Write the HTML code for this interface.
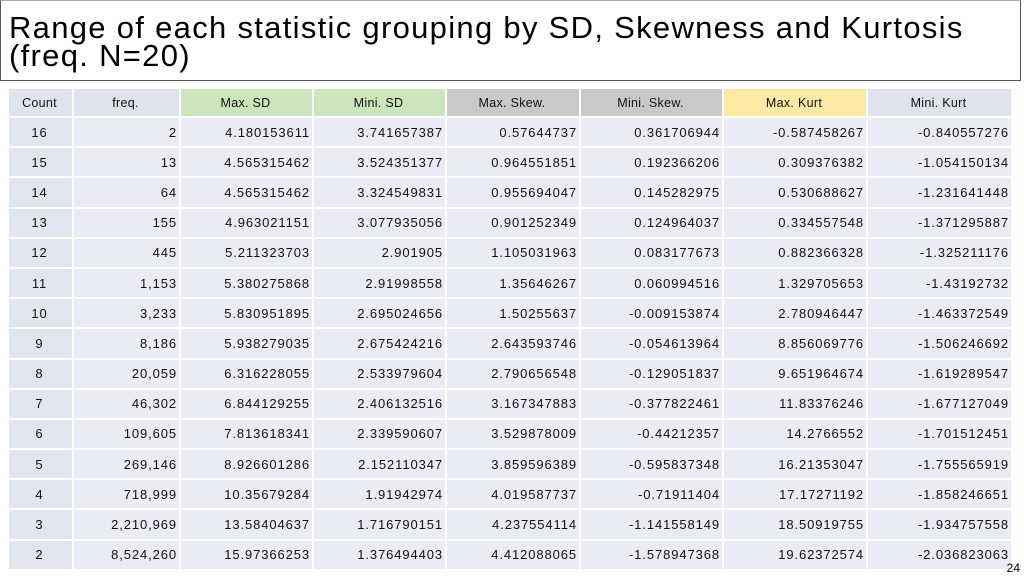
<!DOCTYPE html>
<html><head><meta charset="utf-8"><style>
body{margin:0;width:1024px;height:576px;background:#fff;font-family:"Liberation Sans",sans-serif;overflow:hidden;position:relative}
.title{position:absolute;left:0;top:0;width:1021px;height:81px;border:1px solid #555;border-top-color:#aaa;box-sizing:border-box}
.title div{position:absolute;left:8px;font-size:31px;letter-spacing:1.3px;color:#000;line-height:30px;white-space:nowrap}
table{position:absolute;left:7px;top:87px;border-collapse:collapse;font-size:13px;color:#111;table-layout:fixed}
td{border:2px solid #fff;padding:0 2px 0 0;height:28.2px;text-align:right;background:#e9ecf5;letter-spacing:0.9px;white-space:nowrap;overflow:hidden}
tr.h td{background:#dfe3ee;text-align:center;font-size:12.5px;height:27px;letter-spacing:0.3px}
td.c{text-align:center;background:#e1e5f0}
.g{background:#cde5bd!important}.s{background:#c9c9c9!important}.y{background:#fde9a4!important}
.pg{position:absolute;right:4px;bottom:1px;font-size:12px}
</style></head><body>
<div class="title"><div style="top:12px">Range of each statistic grouping by SD, Skewness and Kurtosis</div><div style="top:40px">(freq. N=20)</div></div>
<table>
<colgroup><col style="width:65px"><col style="width:107px"><col style="width:133px"><col style="width:133px"><col style="width:134px"><col style="width:143px"><col style="width:144px"><col style="width:145px"></colgroup>
<tr class="h"><td>Count</td><td>freq.</td><td class="g">Max. SD</td><td class="g">Mini. SD</td><td class="s">Max. Skew.</td><td class="s">Mini. Skew.</td><td class="y">Max. Kurt</td><td>Mini. Kurt</td></tr>
<tr><td class="c">16</td><td>2</td><td>4.180153611</td><td>3.741657387</td><td>0.57644737</td><td>0.361706944</td><td>-0.587458267</td><td>-0.840557276</td></tr>
<tr><td class="c">15</td><td>13</td><td>4.565315462</td><td>3.524351377</td><td>0.964551851</td><td>0.192366206</td><td>0.309376382</td><td>-1.054150134</td></tr>
<tr><td class="c">14</td><td>64</td><td>4.565315462</td><td>3.324549831</td><td>0.955694047</td><td>0.145282975</td><td>0.530688627</td><td>-1.231641448</td></tr>
<tr><td class="c">13</td><td>155</td><td>4.963021151</td><td>3.077935056</td><td>0.901252349</td><td>0.124964037</td><td>0.334557548</td><td>-1.371295887</td></tr>
<tr><td class="c">12</td><td>445</td><td>5.211323703</td><td>2.901905</td><td>1.105031963</td><td>0.083177673</td><td>0.882366328</td><td>-1.325211176</td></tr>
<tr><td class="c">11</td><td>1,153</td><td>5.380275868</td><td>2.91998558</td><td>1.35646267</td><td>0.060994516</td><td>1.329705653</td><td>-1.43192732</td></tr>
<tr><td class="c">10</td><td>3,233</td><td>5.830951895</td><td>2.695024656</td><td>1.50255637</td><td>-0.009153874</td><td>2.780946447</td><td>-1.463372549</td></tr>
<tr><td class="c">9</td><td>8,186</td><td>5.938279035</td><td>2.675424216</td><td>2.643593746</td><td>-0.054613964</td><td>8.856069776</td><td>-1.506246692</td></tr>
<tr><td class="c">8</td><td>20,059</td><td>6.316228055</td><td>2.533979604</td><td>2.790656548</td><td>-0.129051837</td><td>9.651964674</td><td>-1.619289547</td></tr>
<tr><td class="c">7</td><td>46,302</td><td>6.844129255</td><td>2.406132516</td><td>3.167347883</td><td>-0.377822461</td><td>11.83376246</td><td>-1.677127049</td></tr>
<tr><td class="c">6</td><td>109,605</td><td>7.813618341</td><td>2.339590607</td><td>3.529878009</td><td>-0.44212357</td><td>14.2766552</td><td>-1.701512451</td></tr>
<tr><td class="c">5</td><td>269,146</td><td>8.926601286</td><td>2.152110347</td><td>3.859596389</td><td>-0.595837348</td><td>16.21353047</td><td>-1.755565919</td></tr>
<tr><td class="c">4</td><td>718,999</td><td>10.35679284</td><td>1.91942974</td><td>4.019587737</td><td>-0.71911404</td><td>17.17271192</td><td>-1.858246651</td></tr>
<tr><td class="c">3</td><td>2,210,969</td><td>13.58404637</td><td>1.716790151</td><td>4.237554114</td><td>-1.141558149</td><td>18.50919755</td><td>-1.934757558</td></tr>
<tr><td class="c">2</td><td>8,524,260</td><td>15.97366253</td><td>1.376494403</td><td>4.412088065</td><td>-1.578947368</td><td>19.62372574</td><td>-2.036823063</td></tr>
</table>
<div class="pg">24</div>
</body></html>
